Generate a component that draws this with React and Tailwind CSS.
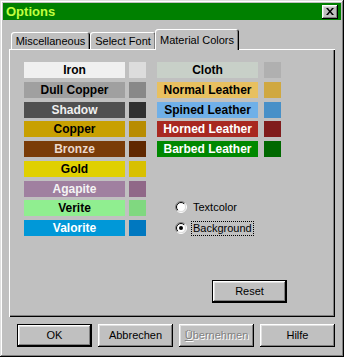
import React from "react"

const leftRows = [
  { name: "Iron", bg: "bg-[#f0f0f0]", fg: "text-black", sw: "bg-[#dcdcdc]" },
  { name: "Dull Copper", bg: "bg-[#a0a0a0]", fg: "text-black", sw: "bg-[#888888]" },
  { name: "Shadow", bg: "bg-[#505050]", fg: "text-[#f0f0f0]", sw: "bg-[#303030]" },
  { name: "Copper", bg: "bg-[#c8a000]", fg: "text-black", sw: "bg-[#b88c00]" },
  { name: "Bronze", bg: "bg-[#7a3c08]", fg: "text-[#ecd8cc]", sw: "bg-[#602800]" },
  { name: "Gold", bg: "bg-[#e0d000]", fg: "text-black", sw: "bg-[#d8c000]" },
  { name: "Agapite", bg: "bg-[#a080a0]", fg: "text-[#f4f4f4]", sw: "bg-[#906888]" },
  { name: "Verite", bg: "bg-[#90ee90]", fg: "text-black", sw: "bg-[#80d880]" },
  { name: "Valorite", bg: "bg-[#0098d8]", fg: "text-white", sw: "bg-[#0078c0]" },
]

const rightRows = [
  { name: "Cloth", bg: "bg-[#c8d0c8]", fg: "text-black", sw: "bg-[#b0b0b0]" },
  { name: "Normal Leather", bg: "bg-[#e8c060]", fg: "text-black", sw: "bg-[#d0a840]" },
  { name: "Spined Leather", bg: "bg-[#70b0e8]", fg: "text-black", sw: "bg-[#4890c8]" },
  { name: "Horned Leather", bg: "bg-[#a82820]", fg: "text-white", sw: "bg-[#801c1c]" },
  { name: "Barbed Leather", bg: "bg-[#008800]", fg: "text-white", sw: "bg-[#006800]" },
]

const bevel =
  "shadow-[inset_-1px_-1px_#000,inset_1px_1px_#fff,inset_-2px_-2px_#808080,inset_2px_2px_#dfdfdf]"

function Radio({ checked }) {
  return (
    <svg width="12" height="12" viewBox="0 0 12 12">
      <defs>
        <linearGradient id="ro" x1="0" y1="0" x2="1" y2="1">
          <stop offset="0.45" stopColor="#808080" />
          <stop offset="0.55" stopColor="#ffffff" />
        </linearGradient>
        <linearGradient id="ri" x1="0" y1="0" x2="1" y2="1">
          <stop offset="0.45" stopColor="#000000" />
          <stop offset="0.55" stopColor="#dfdfdf" />
        </linearGradient>
      </defs>
      <circle cx="6" cy="6" r="5.5" fill="none" stroke="url(#ro)" strokeWidth="1" />
      <circle cx="6" cy="6" r="4.5" fill="#fff" stroke="url(#ri)" strokeWidth="1" />
      {checked && <circle cx="6" cy="6" r="2" fill="#000" />}
    </svg>
  )
}

function ColorRow({ row, gap }) {
  return (
    <div className="flex h-[16px]">
      <div className={`w-[101px] flex items-center justify-center font-bold text-[12px] leading-none ${row.bg} ${row.fg}`}>
        {row.name}
      </div>
      <div className={`w-[17px] ${gap} ${row.sw}`}></div>
    </div>
  )
}

export default function App() {
  return (
    <div className="w-[344px] h-[357px] bg-[#c0c0c0] p-[3px] flex flex-col shadow-[inset_-1px_-1px_#000,inset_1px_1px_#dfdfdf,inset_-2px_-2px_#808080,inset_2px_2px_#fff] font-['Liberation_Sans',Arial,sans-serif] text-[11px] text-black">
      {/* Title bar */}
      <div className="h-[17px] bg-[#008000] flex items-center justify-between pl-[3px] pr-[3px]">
        <span className="text-[13px] font-bold text-[#c0ff40] leading-none">Options</span>
        <button className={`w-[16px] h-[14px] bg-[#c0c0c0] flex items-center justify-center ${bevel}`}>
          <svg width="8" height="7" viewBox="0 0 8 7">
            <path d="M0 0h2l2 2.5L6 0h2L5 3.5 8 7H6L4 4.5 2 7H0l3-3.5z" fill="#000" />
          </svg>
        </button>
      </div>

      <div className="mt-[9px] mx-[6px] flex flex-col">
        {/* Tabs */}
        <div className="flex items-end h-[20px] relative z-10 pl-[2px]">
          <div className="w-[79px] h-[17px] flex items-center justify-center rounded-t-[3px] shadow-[inset_1px_1px_#fff,inset_-1px_0_#000,inset_-2px_0_#808080] pt-[1px]">
            Miscellaneous
          </div>
          <div className="w-[66px] h-[17px] flex items-center justify-center rounded-t-[3px] shadow-[inset_1px_1px_#fff,inset_-1px_0_#000,inset_-2px_0_#808080] pt-[1px]">
            Select Font
          </div>
          <div className="relative z-20 ml-[-1px] mb-[-1px] w-[84px] h-[21px] bg-[#c0c0c0] flex items-start justify-center pt-[3px] rounded-t-[3px] shadow-[inset_1px_1px_#fff,inset_-1px_0_#000,inset_-2px_0_#808080]">
            Material Colors
          </div>
        </div>

        {/* Panel */}
        <div className="h-[268px] flex flex-col shadow-[inset_1px_1px_#fff,inset_-1px_-1px_#000,inset_-2px_-2px_#808080]">
          <div className="flex pt-[13px] pl-[15px]">
            <div className="flex flex-col gap-[3.75px]">
              {leftRows.map((r) => (
                <ColorRow key={r.name} row={r} gap="ml-[4px]" />
              ))}
            </div>
            <div className="flex flex-col ml-[11px]">
              <div className="flex flex-col gap-[3.75px]">
                {rightRows.map((r) => (
                  <ColorRow key={r.name} row={r} gap="ml-[6px]" />
                ))}
              </div>
              <div className="flex flex-col gap-[5px] mt-[42px] ml-[18px]">
                <label className="flex items-center h-[16px] gap-[4px]">
                  <Radio />
                  <span className="border border-transparent px-[1px] leading-[13px]">Textcolor</span>
                </label>
                <label className="flex items-center h-[16px] gap-[4px]">
                  <Radio checked />
                  <span className="border border-dotted border-black px-[1px] leading-[13px]">Background</span>
                </label>
              </div>
            </div>
          </div>
          <div className="mt-auto mb-[14px] mr-[48px] self-end">
            <button className={`w-[75px] h-[23px] border border-black flex items-center justify-center ${bevel}`}>
              Reset
            </button>
          </div>
        </div>
      </div>

      {/* Footer buttons */}
      <div className="flex gap-[6px] mt-[7px] pl-[14px]">
        <button className={`w-[75px] h-[23px] border border-black flex items-center justify-center ${bevel}`}>
          OK
        </button>
        <button className={`w-[75px] h-[23px] flex items-center justify-center ${bevel}`}>
          Abbrechen
        </button>
        <button className={`w-[75px] h-[23px] flex items-center justify-center text-[#808080] [text-shadow:1px_1px_0_#fff] ${bevel}`}>
          <span className="underline">Ü</span>bernehmen
        </button>
        <button className={`w-[75px] h-[23px] flex items-center justify-center ${bevel}`}>
          Hilfe
        </button>
      </div>
    </div>
  )
}
